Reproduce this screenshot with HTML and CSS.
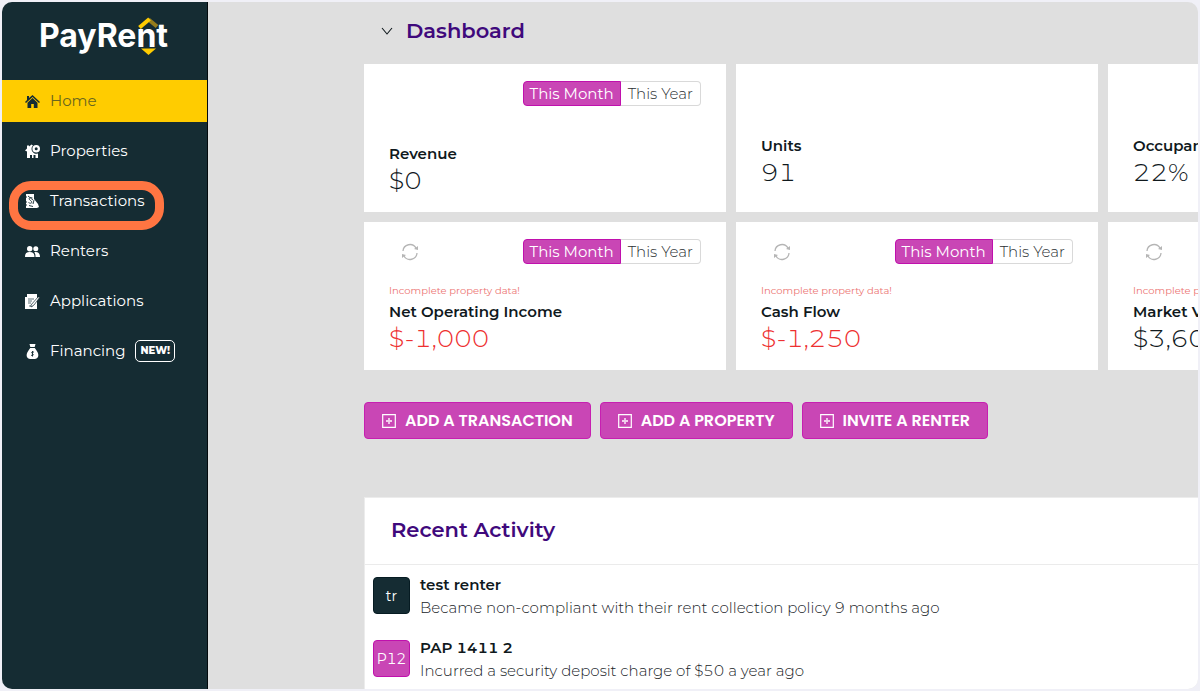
FILE: index.html
```html
<!DOCTYPE html>
<html lang="en">
<head>
<meta charset="utf-8">
<meta name="viewport" content="width=device-width, initial-scale=1">
<title>PayRent Dashboard</title>
<link rel="stylesheet" href="styles.css">
</head>
<body>
<svg class="sprite" aria-hidden="true">
  <symbol id="refresh" viewBox="0 0 18 18"><path d="M2 8a7 7 0 0 1 13-3M16 10a7 7 0 0 1-13 3" fill="none" stroke="currentColor" stroke-width="1.3"/><path d="M17 3v4l-4-1zM1 15v-4l4 1z" fill="currentColor"/></symbol>
  <symbol id="plus" viewBox="0 0 14 14"><path d="M.7.7h12.6v12.6H.7z" fill="none" stroke="currentColor" stroke-width="1.2"/><path d="M7 4v6M4 7h6" stroke="currentColor" stroke-width="1.8" opacity=".75"/></symbol>
</svg>
<div class="frame">
  <aside class="sidebar">
    <a class="logo" href="#" aria-label="PayRent">
      <span>PayRent</span>
      <svg class="logo-mark" viewBox="0 0 22 40" aria-hidden="true"><path d="m11.500 3.500 8.500 7" fill="none" stroke="#957d1d" stroke-width="4"/><path d="M2.500 11.500 12.500 3" fill="none" stroke="#fc0" stroke-width="4"/><path d="M4 32.500h15l-7.500 6.500z" fill="#fc0"/></svg>
    </a>
    <nav class="nav">
      <a class="nav-item active" href="#">
        <svg viewBox="0 0 15 15" aria-hidden="true"><path d="M7.500 1 15 8l-1 1-6.500-6L1 9 0 8l2-2V2h2v2z"/><path d="M2.500 8.700 7.500 4l5 4.700V14h-3.700v-4H6.200v4H2.500z"/></svg>Home</a>
      <a class="nav-item" href="#">
        <svg viewBox="0 0 15 15" aria-hidden="true"><path fill-rule="evenodd" d="M0 6.500 2 4.500V1.500h2v1l2.500-2 1.500 1A4.600 4.600 0 0 0 8.200 8.500c.8.800 2 1.400 3.300 1.300L13 9.500V14h-2.500v-3H8.500v3H7v-3H5v3H2V7.500zM11.200 1a3.800 3.800 0 1 1 0 7.600 3.800 3.800 0 0 1 0-7.600zm0 2.300a1.500 1.500 0 1 0 0 3 1.500 1.500 0 0 0 0-3z"/></svg>Properties</a>
      <a class="nav-item highlighted" href="#">
        <svg viewBox="0 0 15 15" aria-hidden="true"><path d="M1 0h8v5l4 5 1 3-2 1H1v-2l1-1-1-1V9l1-1-1-1V4l1-1-1-1z"/><path d="M7.500 4C4.500 2.500 3 5 5.500 6.500s1 4-2 2M3 2l5 4M9 6l-1 4M4 11.500l4 1" fill="none" stroke="#152c33" stroke-width=".9"/></svg>Transactions</a>
      <a class="nav-item" href="#">
        <svg viewBox="0 0 15 15" aria-hidden="true"><circle cx="4.700" cy="4.700" r="2.700"/><circle cx="10.800" cy="4.700" r="2.500"/><path d="M0 13c0-3 1-5 4.700-5s4.800 2 4.800 5zM10.500 13c0-2-.2-3.500-1.300-4.700C13 7.500 15 9.500 15 13z"/></svg>Renters</a>
      <a class="nav-item" href="#">
        <svg viewBox="0 0 15 15" aria-hidden="true"><path d="M2 0h10v15H0V3h2z"/><path d="M3 5h6M3 7h4M3 9h3M4 12h4" stroke="#60757b" fill="none"/><path d="m6 11 7-8h2l-6 8-3 2z" stroke="#152c33" stroke-width=".7"/></svg>Applications</a>
      <a class="nav-item" href="#">
        <svg viewBox="0 0 15 15" aria-hidden="true"><path d="M4.500 0h6L9.700 3H5.300zM5.200 4h4.600l1.700 2.500C15 11 13 15 9.800 15H5.200C2 15 0 11 3.500 6.500z"/><path d="M9 8.200c-2.500-1-3 .8-1.500 1.500s1 2.500-1.500 1.500M7.500 7v5.500" fill="none" stroke="#152c33" stroke-width=".9"/></svg>Financing <span class="badge">NEW!</span></a>
    </nav>
  </aside>
  <main class="main">
    <header class="heading">
      <svg class="chevron" viewBox="0 0 12 8" aria-hidden="true"><path d="m1 1 5 6 5-6" fill="none" stroke="currentColor" stroke-width="1.100"/></svg>
      <h1>Dashboard</h1>
    </header>
    <section class="cards" aria-label="Summary">
      <article class="card">
        <div class="toolbar"><div class="toggle"><button class="on" type="button">This Month</button><button type="button">This Year</button></div></div>
        <div class="metric"><h2>Revenue</h2><p class="value">$0</p></div>
      </article>
      <article class="card plain"><div class="metric"><h2>Units</h2><p class="value">91</p></div></article>
      <article class="card plain"><div class="metric"><h2>Occupancy</h2><p class="value">22%</p></div></article>
      <article class="card">
        <div class="toolbar"><button class="refresh" type="button" aria-label="Refresh"><svg><use href="#refresh"/></svg></button><div class="toggle"><button class="on" type="button">This Month</button><button type="button">This Year</button></div></div>
        <div class="metric"><p class="note">Incomplete property data!</p><h2>Net Operating Income</h2><p class="value loss">$-1,000</p></div>
      </article>
      <article class="card">
        <div class="toolbar"><button class="refresh" type="button" aria-label="Refresh"><svg><use href="#refresh"/></svg></button><div class="toggle"><button class="on" type="button">This Month</button><button type="button">This Year</button></div></div>
        <div class="metric"><p class="note">Incomplete property data!</p><h2>Cash Flow</h2><p class="value loss">$-1,250</p></div>
      </article>
      <article class="card">
        <div class="toolbar"><button class="refresh" type="button" aria-label="Refresh"><svg><use href="#refresh"/></svg></button></div>
        <div class="metric"><p class="note">Incomplete property data!</p><h2>Market Value</h2><p class="value">$3,600</p></div>
      </article>
    </section>
    <div class="actions">
      <button type="button"><svg aria-hidden="true"><use href="#plus"/></svg>ADD A TRANSACTION</button>
      <button type="button"><svg aria-hidden="true"><use href="#plus"/></svg>ADD A PROPERTY</button>
      <button type="button"><svg aria-hidden="true"><use href="#plus"/></svg>INVITE A RENTER</button>
    </div>
    <section class="activity">
      <h2 class="activity-title">Recent Activity</h2>
      <ul>
        <li><span class="avatar">tr</span><div><h3>test renter</h3><p>Became non-compliant with their rent collection policy 9 months ago</p></div></li>
        <li><span class="avatar pink">P12</span><div><h3>PAP 1411 2</h3><p>Incurred a security deposit charge of $50 a year ago</p></div></li>
      </ul>
    </section>
  </main>
</div>
</body>
</html>
```

FILE: styles.css
```css
*, *::after { box-sizing: border-box; }
body, h1, h2, h3, p, ul { margin: 0; padding: 0; }
body {
  background: #f0f0f7;
  color: #10191d;
  font: 15px/20px Montserrat, Inter, "Open Sans", sans-serif;
  font-variant-numeric: tabular-nums;
}
button { font: inherit; color: inherit; margin: 0; cursor: pointer; }
a { color: inherit; text-decoration: none; }
.sprite { position: absolute; width: 0; height: 0; }

.frame {
  display: flex;
  height: 100vh;
  border: 2px solid #f0f0f7;
  border-radius: 12px;
  overflow: hidden;
  background: #dfdfdf;
}

.sidebar {
  flex: 0 0 206px;
  background: #152c33;
  border-right: 1px solid #02090c;
  color: #fff;
}
.logo {
  position: relative;
  display: flex;
  height: 78px;
  padding: 14px 0 0 37px;
  font-family: Inter, sans-serif;
  font-size: 32px;
  line-height: 40px;
  font-weight: 700;
}
.logo-mark { position: absolute; left: 135px; top: 14px; width: 22px; height: 40px; }
.nav { display: flex; flex-direction: column; gap: 8px; }
.nav-item {
  position: relative;
  display: flex;
  align-items: center;
  height: 42px;
  padding-left: 23px;
  gap: 10px;
}
.nav-item svg { width: 15px; height: 15px; fill: currentColor; }
.nav-item.active { background: #fc0; color: #69651f; }
.nav-item.active svg { color: #152c33; }
.nav-item.highlighted::after {
  content: "";
  position: absolute;
  left: 7px;
  top: 1px;
  width: 155px;
  height: 49px;
  border: 9px solid #ff7542;
  border-radius: 22px;
}
.badge {
  padding: 0 4px;
  border: 1px solid #fff;
  border-radius: 5px;
  font-size: 10px;
  font-weight: 800;
}

.main {
  flex: 1;
  min-width: 0;
  display: flex;
  flex-direction: column;
  padding-left: 156px;
  overflow: hidden;
}
.heading {
  display: flex;
  flex: none;
  align-items: center;
  gap: 13px;
  height: 62px;
  padding: 0 0 4px 17px;
}
.chevron { width: 12px; height: 8px; }
h1, .activity-title { font-size: 21px; line-height: 28px; font-weight: 600; color: #3f097c; }

.cards {
  display: grid;
  grid-template-columns: repeat(3, minmax(362px, 1fr));
  gap: 10px;
}
.card {
  display: flex;
  flex-direction: column;
  min-height: 148px;
  padding: 17px 25px 16px;
  background: #fff;
}
.card.plain { padding-bottom: 24px; }
.toolbar { display: flex; align-items: center; min-height: 25px; }
.refresh { display: flex; padding: 0 12px; border: 0; background: none; color: #b5b5b5; }
.refresh svg { width: 18px; height: 18px; }
.toggle { display: flex; margin-left: auto; }
.toggle button {
  height: 25px;
  padding: 0 7px;
  border: 1px solid #d9d9d9;
  border-left: 0;
  border-radius: 0 4px 4px 0;
  background: #fff;
  color: #2b2f33;
  font-weight: 300;
}
.toggle .on {
  padding: 0 6px;
  border: 1px solid #c010ad;
  border-radius: 4px 0 0 4px;
  background: #c946b5;
  color: #fff;
  font-weight: 400;
}
.metric { margin-top: auto; }
.note { font-size: 10px; line-height: 20px; color: #ec7573; }
.metric h2 { font-size: 15px; line-height: 22px; font-weight: 600; }
.value { font-size: 25px; line-height: 31px; font-weight: 300; }
.loss { color: #ee3030; }

.actions { display: flex; gap: 9px; padding: 32px 0 58px; }
.actions button {
  display: flex;
  align-items: center;
  gap: 9px;
  height: 37px;
  padding: 0 17px;
  border: 1px solid #c71fb1;
  border-radius: 4px;
  background: #c946b5;
  color: #fff;
  font-family: Poppins, Inter, sans-serif;
  font-size: 16px;
  font-weight: 600;
  white-space: nowrap;
}
.actions svg { width: 14px; height: 14px; }

.activity { flex: 1; border: 1px solid #ececec; border-right: 0; background: #fff; }
.activity-title { padding: 18px 26px 20px; border-bottom: 1px solid #ebebeb; }
.activity ul { list-style: none; padding: 9px 8px 0; }
.activity li { display: flex; gap: 10px; padding-bottom: 18px; }
.activity h3 { font-size: 15px; line-height: 22px; font-weight: 600; }
.activity p { margin-top: 1px; line-height: 22px; font-weight: 300; color: #202428; }
.activity li > div { flex: 1; }
.avatar {
  display: flex;
  align-items: center;
  justify-content: center;
  width: 37px;
  height: 37px;
  margin-top: 3px;
  border: 1px solid #061b22;
  border-radius: 4px;
  background: #152c33;
  color: #fff;
  font-size: 14px;
}
.avatar.pink { background: #c946b5; border-color: #c010ad; }
```
